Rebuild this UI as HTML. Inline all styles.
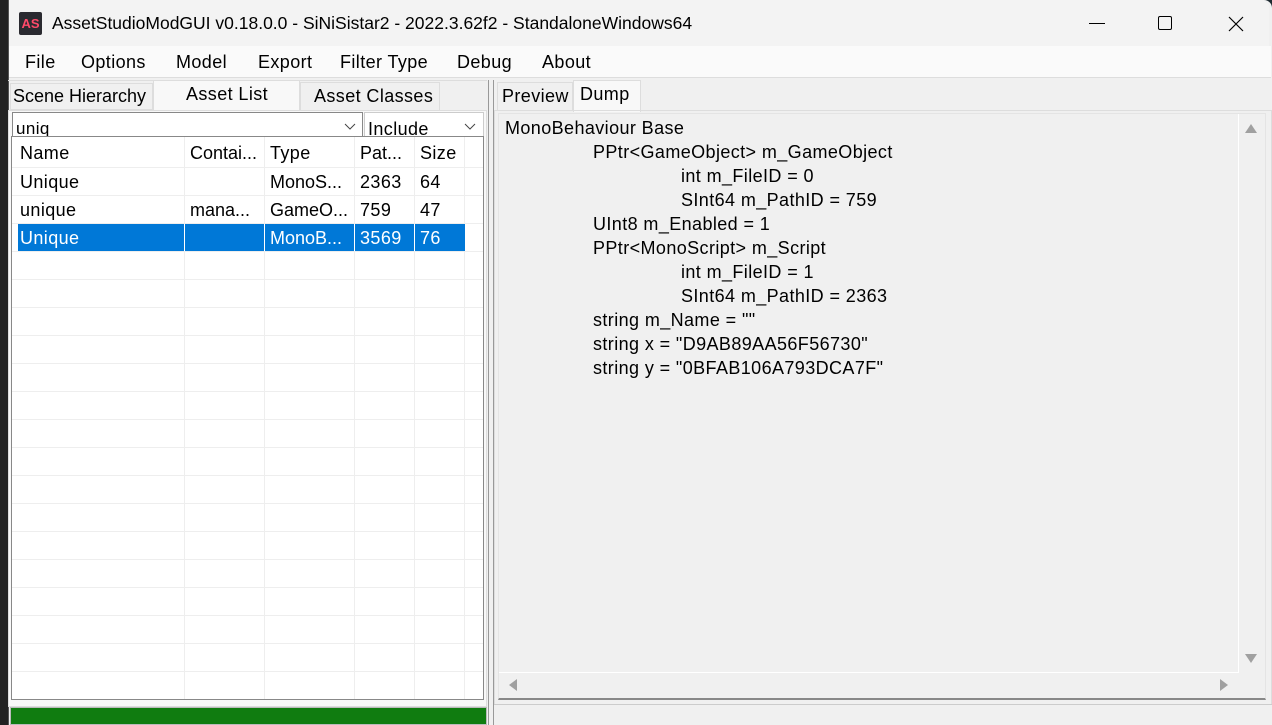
<!DOCTYPE html>
<html><head><meta charset="utf-8"><style>
*{margin:0;padding:0;box-sizing:border-box}
body{width:1272px;height:725px;overflow:hidden;background:#1e2a30;font-family:"Liberation Sans","Noto Sans CJK SC",sans-serif;font-size:18px;color:#000;position:relative}
.a{position:absolute}
.t{white-space:nowrap;letter-spacing:0.4px}
</style></head><body>
<div class="a" style="left:0;top:0;width:8px;height:725px;background:#222"></div>
<div class="a" style="left:8px;top:0;width:1264px;height:725px;background:#f0f0f0;border-top-right-radius:8px;border-left:1px solid #555"></div>
<!-- title bar -->
<div class="a" style="left:9px;top:0;width:1260px;height:46px;background:#f3f3f3;border-top-right-radius:8px"></div>
<div class="a" style="left:19px;top:12px;width:23px;height:23px;background:#2a2a30;border-radius:2px;color:#ff4a6a;font-weight:bold;font-size:13px;line-height:23px;text-align:center">AS</div>
<div class="a" style="left:52px;top:13px;font-size:17.5px;white-space:nowrap">AssetStudioModGUI v0.18.0.0 - SiNiSistar2 - 2022.3.62f2 - StandaloneWindows64</div>
<div class="a" style="left:1089px;top:23px;width:16px;height:1px;background:#000"></div>
<div class="a" style="left:1158px;top:16px;width:14px;height:14px;border:1.3px solid #000;border-radius:2px"></div>
<svg class="a" style="left:1228px;top:16px" width="16" height="16"><path d="M1 1L15 15M15 1L1 15" stroke="#000" stroke-width="1.2"/></svg>
<!-- menu -->
<div class="a" style="left:9px;top:46px;width:1262px;height:32px;background:#fafafa;border-bottom:1px solid #ddd"></div>
<div class="a t" style="left:25px;top:52px">File</div>
<div class="a t" style="left:81px;top:52px">Options</div>
<div class="a t" style="left:176px;top:52px">Model</div>
<div class="a t" style="left:258px;top:52px">Export</div>
<div class="a t" style="left:340px;top:52px">Filter Type</div>
<div class="a t" style="left:457px;top:52px">Debug</div>
<div class="a t" style="left:542px;top:52px">About</div>
<!-- left tabs -->
<div class="a" style="left:8px;top:80px;width:479px;height:627px;border-top:1px solid #ddd"></div>
<div class="a" style="left:10px;top:83px;width:143px;height:27px;border:1px solid #ddd;background:#f0f0f0"></div>
<div class="a t" style="left:13px;top:86px;letter-spacing:0">Scene Hierarchy</div>
<div class="a" style="left:153px;top:80px;width:147px;height:32px;background:#f8f8f8;border:1px solid #ddd;border-bottom:none"></div>
<div class="a t" style="left:186px;top:84px">Asset List</div>
<div class="a" style="left:300px;top:82px;width:140px;height:29px;border:1px solid #ddd"></div>
<div class="a t" style="left:314px;top:86px">Asset Classes</div>
<div class="a" style="left:8px;top:110px;width:479px;height:597px;background:#f8f8f8;border:1px solid #ddd"></div>
<!-- search -->
<div class="a" style="left:12px;top:112px;width:351px;height:25px;background:#fff;border:1px solid #888;overflow:hidden"><div class="t" style="position:absolute;left:3px;top:6px;font-size:17px">uniq</div></div>
<svg class="a" style="left:344px;top:123px" width="12" height="8"><path d="M1 1L6 6L11 1" stroke="#444" fill="none"/></svg>
<div class="a" style="left:364px;top:112px;width:120px;height:25px;background:#fff;border:1px solid #ccc;overflow:hidden"><div class="t" style="position:absolute;left:3px;top:6px">Include</div></div>
<svg class="a" style="left:464px;top:123px" width="12" height="8"><path d="M1 1L6 6L11 1" stroke="#444" fill="none"/></svg>
<!-- list -->
<div class="a" style="left:11px;top:136px;width:473px;height:564px;background:#fff;border:1px solid #888;overflow:hidden">
<svg width="473" height="564" style="position:absolute;left:0;top:0">
<g stroke="#eee" stroke-width="1">
<line x1="172.5" y1="0" x2="172.5" y2="564"/><line x1="252.5" y1="0" x2="252.5" y2="564"/><line x1="342.5" y1="0" x2="342.5" y2="564"/><line x1="402.5" y1="0" x2="402.5" y2="564"/><line x1="452.5" y1="0" x2="452.5" y2="564"/>
<line x1="0" y1="30.5" x2="473" y2="30.5"/><line x1="0" y1="58.5" x2="473" y2="58.5"/><line x1="0" y1="86.5" x2="473" y2="86.5"/><line x1="0" y1="114.5" x2="473" y2="114.5"/><line x1="0" y1="142.5" x2="473" y2="142.5"/><line x1="0" y1="170.5" x2="473" y2="170.5"/><line x1="0" y1="198.5" x2="473" y2="198.5"/><line x1="0" y1="226.5" x2="473" y2="226.5"/><line x1="0" y1="254.5" x2="473" y2="254.5"/><line x1="0" y1="282.5" x2="473" y2="282.5"/><line x1="0" y1="310.5" x2="473" y2="310.5"/><line x1="0" y1="338.5" x2="473" y2="338.5"/><line x1="0" y1="366.5" x2="473" y2="366.5"/><line x1="0" y1="394.5" x2="473" y2="394.5"/><line x1="0" y1="422.5" x2="473" y2="422.5"/><line x1="0" y1="450.5" x2="473" y2="450.5"/><line x1="0" y1="478.5" x2="473" y2="478.5"/><line x1="0" y1="506.5" x2="473" y2="506.5"/><line x1="0" y1="534.5" x2="473" y2="534.5"/>
</g>
<rect x="6" y="87" width="447" height="27" fill="#0078d7"/>
<g stroke="#fff"><line x1="172.5" y1="87" x2="172.5" y2="114"/><line x1="252.5" y1="87" x2="252.5" y2="114"/><line x1="342.5" y1="87" x2="342.5" y2="114"/><line x1="402.5" y1="87" x2="402.5" y2="114"/></g>
</svg>
</div>
<div class="a t" style="left:20px;top:143px">Name</div><div class="a t" style="left:190px;top:143px;letter-spacing:0">Contai...</div><div class="a t" style="left:270px;top:143px">Type</div><div class="a t" style="left:360px;top:143px;letter-spacing:0">Pat...</div><div class="a t" style="left:420px;top:143px">Size</div>
<div class="a t" style="left:20px;top:172px">Unique</div><div class="a t" style="left:270px;top:172px;letter-spacing:0">MonoS...</div><div class="a t" style="left:360px;top:172px">2363</div><div class="a t" style="left:420px;top:172px">64</div>
<div class="a t" style="left:20px;top:200px">unique</div><div class="a t" style="left:190px;top:200px;letter-spacing:0">mana...</div><div class="a t" style="left:270px;top:200px;letter-spacing:0">GameO...</div><div class="a t" style="left:360px;top:200px">759</div><div class="a t" style="left:420px;top:200px">47</div>
<div class="a t" style="left:20px;top:228px;color:#fff">Unique</div><div class="a t" style="left:270px;top:228px;color:#fff;letter-spacing:0">MonoB...</div><div class="a t" style="left:360px;top:228px;color:#fff">3569</div><div class="a t" style="left:420px;top:228px;color:#fff">76</div>
<div class="a" style="left:10px;top:707px;width:477px;height:18px;background:#107c10;border:1px solid #bbb"></div>
<!-- splitter -->
<div class="a" style="left:488px;top:80px;width:1px;height:645px;background:#999"></div>
<div class="a" style="left:493px;top:80px;width:1px;height:645px;background:#999"></div>
<!-- right tabs -->
<div class="a" style="left:497px;top:82px;width:76px;height:29px;border:1px solid #ddd"></div>
<div class="a t" style="left:502px;top:86px">Preview</div>
<div class="a" style="left:573px;top:80px;width:68px;height:32px;background:#f8f8f8;border:1px solid #ddd;border-bottom:none"></div>
<div class="a t" style="left:580px;top:84px">Dump</div>
<div class="a" style="left:494px;top:110px;width:778px;height:595px;border:1px solid #ddd"></div>
<div class="a" style="left:498px;top:113px;width:768px;height:587px;border:1px solid #e4e4e4;border-bottom:2px solid #888;background:#f0f0f0"></div>
<div class="a" style="left:1238px;top:114px;width:1px;height:558px;background:#fff"></div>
<div class="a" style="left:499px;top:672px;width:740px;height:1px;background:#fff"></div>
<svg class="a" style="left:1244px;top:122px" width="14" height="12"><path d="M1 11L7 2L13 11Z" fill="#a0a0a0"/></svg>
<svg class="a" style="left:1244px;top:653px" width="14" height="12"><path d="M1 1L7 10L13 1Z" fill="#a0a0a0"/></svg>
<svg class="a" style="left:507px;top:678px" width="12" height="14"><path d="M10 1L2 7L10 13Z" fill="#a0a0a0"/></svg>
<svg class="a" style="left:1218px;top:678px" width="12" height="14"><path d="M2 1L10 7L2 13Z" fill="#a0a0a0"/></svg>
<div class="a" style="left:494px;top:704px;width:778px;height:1px;background:#ccc"></div>
<!-- dump text -->
<div class="a t" style="left:505px;top:116px;line-height:24px">
<div>MonoBehaviour Base</div>
<div style="padding-left:88px">PPtr&lt;GameObject&gt; m_GameObject</div>
<div style="padding-left:176px">int m_FileID = 0</div>
<div style="padding-left:176px">SInt64 m_PathID = 759</div>
<div style="padding-left:88px">UInt8 m_Enabled = 1</div>
<div style="padding-left:88px">PPtr&lt;MonoScript&gt; m_Script</div>
<div style="padding-left:176px">int m_FileID = 1</div>
<div style="padding-left:176px">SInt64 m_PathID = 2363</div>
<div style="padding-left:88px">string m_Name = ""</div>
<div style="padding-left:88px">string x = "D9AB89AA56F56730"</div>
<div style="padding-left:88px">string y = "0BFAB106A793DCA7F"</div>
</div>
</body></html>
